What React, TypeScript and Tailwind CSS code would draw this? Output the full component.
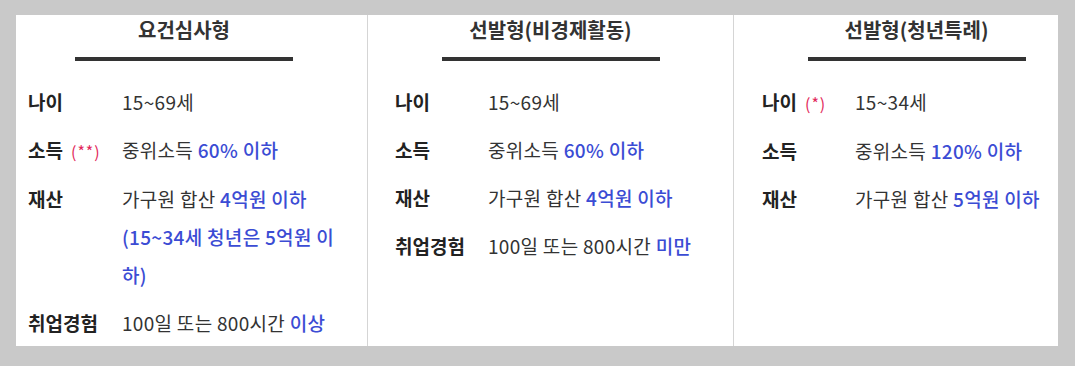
import type { ReactNode } from 'react'

type Row = { label: string; mark?: string; value: ReactNode }

const Hl = ({ children }: { children: ReactNode }) => (
  <span className="font-medium text-[#3b4cd4]">{children}</span>
)

const columns: { title: string; rows: Row[]; wrap: string; head: string; labelW: string }[] = [
  {
    title: '요건심사형',
    wrap: 'ml-[16px] w-[351px] pl-[12px]',
    head: 'pr-[27px]',
    labelW: 'w-[94px]',
    rows: [
      { label: '나이', value: '15~69세' },
      { label: '소득', mark: '(**)', value: <>중위소득 <Hl>60% 이하</Hl></> },
      {
        label: '재산',
        value: (
          <>
            가구원 합산 <Hl>4억원 이하</Hl>
            <br />
            <Hl>(15~34세 청년은 5억원 이</Hl>
            <br />
            <Hl>하)</Hl>
          </>
        ),
      },
      { label: '취업경험', value: <>100일 또는 800시간 <Hl>이상</Hl></> },
    ],
  },
  {
    title: '선발형(비경제활동)',
    wrap: 'w-[365px] pl-[27px]',
    head: 'pr-[27px]',
    labelW: 'w-[93px]',
    rows: [
      { label: '나이', value: '15~69세' },
      { label: '소득', value: <>중위소득 <Hl>60% 이하</Hl></> },
      { label: '재산', value: <>가구원 합산 <Hl>4억원 이하</Hl></> },
      { label: '취업경험', value: <>100일 또는 800시간 <Hl>미만</Hl></> },
    ],
  },
  {
    title: '선발형(청년특례)',
    wrap: 'w-[324px] pl-[28px]',
    head: 'pl-[13px]',
    labelW: 'w-[93px]',
    rows: [
      { label: '나이', mark: '(*)', value: '15~34세' },
      { label: '소득', value: <>중위소득 <Hl>120% 이하</Hl></> },
      { label: '재산', value: <>가구원 합산 <Hl>5억원 이하</Hl></> },
    ],
  },
]

export default function App() {
  return (
    <div
      className="h-[366px] w-[1075px] overflow-hidden bg-[#c9c9c9] pt-[15px]"
      style={{ fontFamily: '"Noto Sans CJK KR", "Noto Sans", sans-serif' }}
    >
      <div className="flex items-start">
        {columns.map((col, i) => (
          <div key={col.title} className="flex items-start">
            {i > 0 && <div className="h-[331px] w-px bg-[#d5d5d5]" />}
            <div className={`h-[331px] bg-white ${col.wrap}`}>
              <div className={`flex flex-col items-center ${col.head}`}>
                <h3 className="pt-[2px] text-[20px] leading-[26px] font-semibold text-[#333]">
                  {col.title}
                </h3>
                <div className="mt-[14px] h-[4px] w-[218px] bg-[#333]" />
              </div>
              <div className="mt-[22px] flex flex-col gap-[10px]">
                {col.rows.map((r) => (
                  <div key={r.label} className="flex text-[19px] leading-[38px]">
                    <div className={`${col.labelW} shrink-0 font-bold text-[#222]`}>
                      {r.label}
                      {r.mark && (
                        <span className="ml-[8px] text-[16px] font-normal tracking-[1px] text-[#e2285a]">
                          {r.mark}
                        </span>
                      )}
                    </div>
                    <div className="whitespace-nowrap tracking-[0.3px] text-[#333]">{r.value}</div>
                  </div>
                ))}
              </div>
            </div>
          </div>
        ))}
      </div>
    </div>
  )
}
